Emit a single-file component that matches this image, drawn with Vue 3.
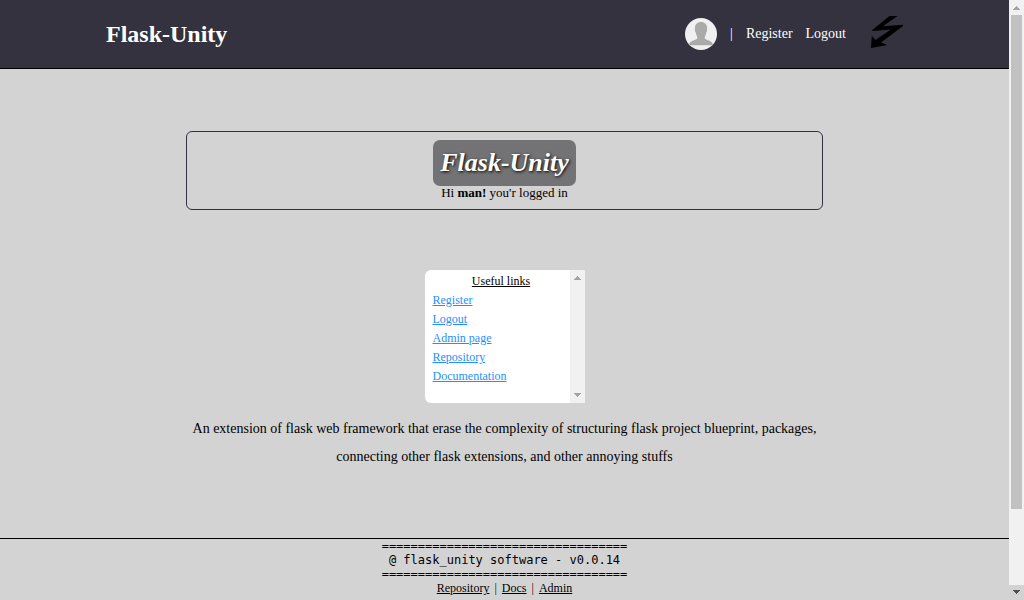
<script setup>
const links = ['Register', 'Logout', 'Admin page', 'Repository', 'Documentation']
const footerLinks = ['Repository', 'Docs', 'Admin']
const rule = '='.repeat(34)
</script>

<template>
  <div class="window">
    <div class="page">
      <header class="topbar">
        <h1 class="brand">Flask-Unity</h1>
        <nav class="nav">
          <svg class="avatar" viewBox="0 0 32 32" role="img" aria-label="Profile">
            <circle cx="16" cy="16" r="16" fill="#f0f0f0" />
            <path
              fill="#aaaba9"
              d="M16 4C12.200 4 9.800 6.500 9.900 10.500C9.600 12 10.200 14 10.900 15C11.200 16.800 11.700 18 12.200 18.800V20.500C11 22.300 5.500 22.400 4.400 25.600V27.200H27.600V25.600C26.500 22.400 21 22.300 19.800 20.500V18.800C20.300 18 20.800 16.800 21.100 15C21.800 14 22.400 12 22.100 10.500C22.200 6.500 19.800 4 16 4Z"
            />
          </svg>
          <span class="divider">|</span>
          <a href="#">Register</a>
          <a href="#">Logout</a>
          <svg class="bolt" viewBox="0 0 32 32" aria-hidden="true">
            <path d="M18.500 0H26.500L12 10.300L32 8.800V10L10 26.600L16 29L0 32L0.800 19.800L4.500 24L19.800 13.600L1.300 15V14Z" />
          </svg>
        </nav>
      </header>

      <main class="content">
        <section class="welcome">
          <h2 class="badge">Flask-Unity</h2>
          <p class="greeting">Hi <b>man!</b> you'r logged in</p>
        </section>

        <section class="links">
          <div class="links-body">
            <h3>Useful links</h3>
            <ul>
              <li v-for="link in links" :key="link"><a href="#">{{ link }}</a></li>
            </ul>
          </div>
          <div class="track" aria-hidden="true">
            <svg class="arrow muted" viewBox="0 0 15 15"><path d="M4 10H11V9H10V8H9V7H8V6H7V7H6V8H5V9H4Z" /></svg>
            <svg class="arrow muted" viewBox="0 0 15 15"><path d="M4 5H11V6H10V7H9V8H8V9H7V8H6V7H5V6H4Z" /></svg>
          </div>
        </section>

        <p class="about">
          An extension of flask web framework that erase the complexity of structuring flask project
          blueprint, packages, connecting other flask extensions, and other annoying stuffs
        </p>
      </main>

      <footer class="footer">
        <div class="mono">{{ rule }}</div>
        <div class="mono">@ flask_unity software - v0.0.14</div>
        <div class="mono">{{ rule }}</div>
        <div class="footer-links">
          <template v-for="(link, i) in footerLinks" :key="link">
            <span v-if="i">|</span>
            <a href="#">{{ link }}</a>
          </template>
        </div>
      </footer>
    </div>

    <div class="track page-track" aria-hidden="true">
      <svg class="arrow muted" viewBox="0 0 15 15"><path d="M4 10H11V9H10V8H9V7H8V6H7V7H6V8H5V9H4Z" /></svg>
      <div class="thumb"></div>
      <svg class="arrow pressed" viewBox="0 0 15 15"><path d="M4 5H11V6H10V7H9V8H8V9H7V8H6V7H5V6H4Z" /></svg>
    </div>
  </div>
</template>

<style>
body {
  margin: 0;
  background: #d3d3d3;
}
</style>

<style scoped>
.window {
  display: flex;
  min-height: 100vh;
  color: #000;
  font-family: "Liberation Serif", serif;
}
h1, h2, h3, p, ul {
  margin: 0;
  padding: 0;
}
.page {
  display: flex;
  flex: 1;
  flex-direction: column;
}
.topbar {
  display: flex;
  align-items: center;
  justify-content: space-between;
  height: 68px;
  padding: 0 106px;
  border-bottom: 1px solid #000;
  background: #33323e;
  color: #fff;
}
.brand {
  font-size: 24px;
  line-height: 28px;
}
.nav {
  display: flex;
  align-items: center;
  gap: 13px;
  font-size: 14px;
  line-height: 18px;
}
.nav a {
  color: #fff;
  text-decoration: none;
}
.avatar {
  width: 32px;
  height: 32px;
}
.bolt {
  width: 32px;
  height: 32px;
  margin: 0 0 4px 12px;
}
.content {
  display: flex;
  flex: 1;
  flex-direction: column;
  align-items: center;
  padding: 62px 186px 0;
}
.welcome {
  display: flex;
  flex-direction: column;
  align-items: center;
  align-self: stretch;
  padding: 8px 8px 9px;
  border: 1px solid #33323e;
  border-radius: 6px;
}
.badge {
  padding: 8px 7px;
  border-radius: 7px;
  background: #737375;
  color: #fff;
  font-size: 26px;
  font-style: italic;
  line-height: 30px;
  text-shadow: 1px 1px 3px #000;
}
.greeting {
  font-size: 13px;
  line-height: 14px;
}
.links {
  display: flex;
  width: 160px;
  height: 133px;
  margin-top: 60px;
  overflow: hidden;
  border-radius: 6px 0 0 6px;
  background: #fff;
  font-size: 12px;
}
.links-body {
  flex: 1;
  padding: 4px 0 0 8px;
}
.links h3 {
  font-size: 12px;
  font-weight: normal;
  line-height: 15px;
  text-align: center;
  text-decoration: underline;
}
.links ul {
  padding-top: 2px;
  list-style: none;
}
.links li {
  line-height: 19px;
}
.links a {
  color: #1e90ff;
}
.track {
  display: flex;
  flex-direction: column;
  justify-content: space-between;
  width: 15px;
  background: #f1f1f1;
}
.arrow {
  display: block;
  width: 15px;
  height: 15px;
}
.muted {
  fill: #a3a3a3;
}
.page-track {
  height: 100vh;
}
.thumb {
  height: 494px;
  margin: 0 2px auto;
  background: #c1c1c1;
}
.pressed {
  background: #d2d2d2;
  fill: #505050;
}
.about {
  padding-top: 12px;
  font-size: 14px;
  line-height: 28px;
  text-align: center;
}
.footer {
  padding: 0 0 5px;
  border-top: 1px solid #000;
  font-size: 12px;
  line-height: 14px;
  text-align: center;
}
.mono {
  font-family: "DejaVu Sans Mono", monospace;
}
.footer-links {
  display: flex;
  justify-content: center;
  gap: 5px;
}
.footer-links a {
  color: #000;
}
</style>
